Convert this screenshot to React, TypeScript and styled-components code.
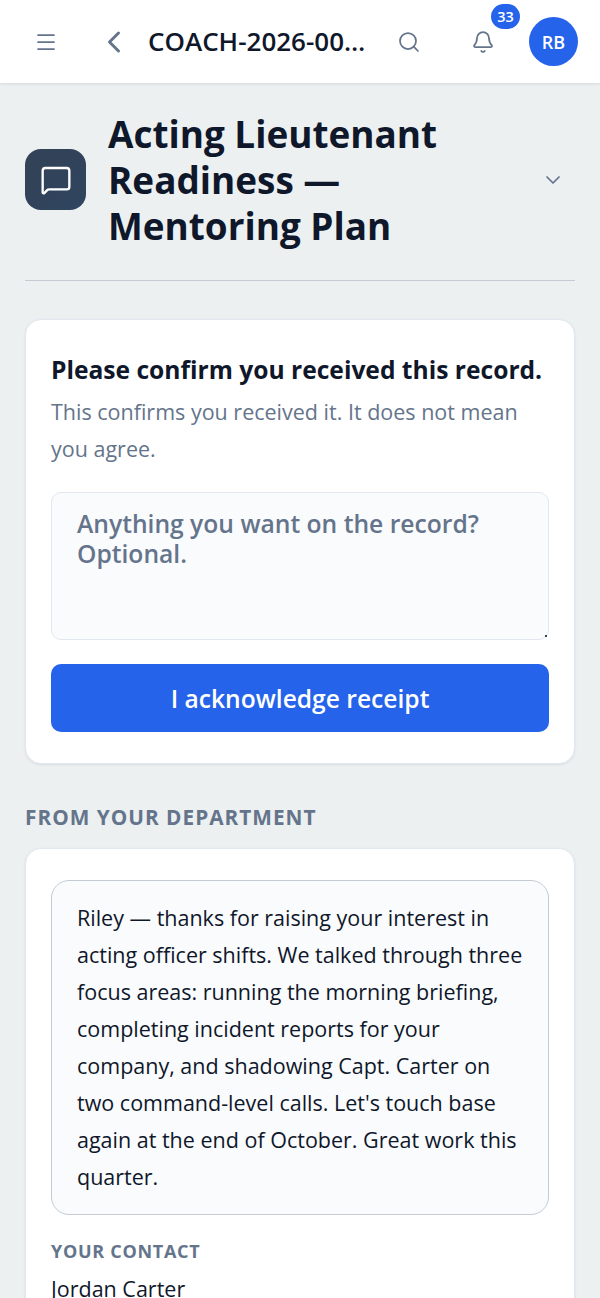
import styled, { createGlobalStyle } from 'styled-components'
import { Menu, ChevronLeft, ChevronDown, Search, Bell, MessageSquare } from 'lucide-react'

const GlobalStyle = createGlobalStyle`
  html, body {
    margin: 0;
    padding: 0;
    background: #ecf0f1;
  }
  body {
    font-family: 'Open Sans', 'Noto Sans', sans-serif;
    color: #0f172a;
    overflow: hidden;
    height: 1298px;
  }
  * {
    box-sizing: border-box;
  }
`

const TopBar = styled.header`
  height: 83px;
  background: #ffffff;
  box-shadow: 0 1px 3px rgba(15, 23, 42, 0.1);
  display: flex;
  align-items: center;
  padding: 0 22px 0 34px;
  position: relative;
`

const IconButton = styled.div<{ $width: number; $inset?: number }>`
  width: ${(p) => p.$width}px;
  padding-left: ${(p) => p.$inset || 0}px;
  flex: none;
  display: flex;
  align-items: center;
  color: #64748b;
`

const RecordId = styled.div`
  width: 221px;
  flex: none;
  margin-bottom: 2px;
  font-size: 26px;
  font-weight: 600;
  line-height: 36px;
  color: #0f172a;
  white-space: nowrap;
  overflow: hidden;
  text-overflow: ellipsis;
`

const BellWrap = styled.div`
  width: 59px;
  height: 40px;
  flex: none;
  display: flex;
  align-items: center;
  padding-left: 1px;
  color: #64748b;
  position: relative;
`

const Badge = styled.span`
  position: absolute;
  left: 21px;
  top: -18px;
  width: 29px;
  height: 25px;
  border-radius: 13px;
  background: #2563eb;
  color: #ffffff;
  font-size: 14.5px;
  font-weight: 600;
  line-height: 25px;
  text-align: center;
`

const Avatar = styled.div`
  width: 49px;
  height: 49px;
  flex: none;
  border-radius: 50%;
  background: #2563eb;
  color: #ffffff;
  font-size: 18px;
  font-weight: 600;
  display: flex;
  align-items: center;
  justify-content: center;
`

const Content = styled.main`
  padding: 28px 25px 0;
`

const TitleRow = styled.div`
  display: flex;
  align-items: center;
  padding-bottom: 31px;
  border-bottom: 1px solid #c4cbd2;
`

const TitleIcon = styled.div`
  width: 61px;
  height: 61px;
  flex: none;
  border-radius: 16px;
  background: linear-gradient(135deg, #334155, #2f4560);
  color: #ffffff;
  display: flex;
  align-items: center;
  justify-content: center;
  margin: 0 22px 1px 0;
`

const Title = styled.h1`
  flex: 1;
  margin: 0;
  font-size: 36.9px;
  font-weight: 700;
  line-height: 46px;
  color: #0f172a;
`

const Collapse = styled.div`
  width: 58px;
  flex: none;
  display: flex;
  justify-content: center;
  color: #64748b;
  padding-left: 14px;
`

const Card = styled.section`
  background: #ffffff;
  border-radius: 16px;
  border: 1px solid #e2e8f0;
  box-shadow: 0 1px 3px rgba(15, 23, 42, 0.08);
`

const AckCard = styled(Card)`
  margin-top: 38px;
  padding: 31px 25px 31px;
`

const AckTitle = styled.h2`
  margin: 0;
  font-size: 24.6px;
  font-weight: 700;
  line-height: 38px;
  color: #0f172a;
`

const AckHint = styled.p`
  margin: 4px 0 25px;
  font-size: 21.5px;
  line-height: 37px;
  color: #64748b;
`

const NoteInput = styled.textarea`
  display: block;
  width: 100%;
  height: 148px;
  padding: 16px 25px;
  border: 1px solid #e2e8f0;
  border-radius: 10px;
  background: #fafbfd;
  font-family: inherit;
  font-size: 24.65px;
  font-weight: 600;
  line-height: 30px;
  color: #0f172a;

  &::placeholder {
    color: #64748b;
    opacity: 1;
  }

  &::-webkit-resizer {
    background: radial-gradient(circle at 13px 12px, #334155 1px, transparent 1.5px);
  }
`

const AckButton = styled.button`
  display: block;
  width: 100%;
  height: 68px;
  margin-top: 24px;
  border: none;
  border-radius: 10px;
  background: #2563eb;
  color: #ffffff;
  font-family: inherit;
  font-size: 24.6px;
  font-weight: 600;
`

const SectionLabel = styled.h3`
  margin: 37px 0 15px;
  font-size: 20.8px;
  font-weight: 700;
  line-height: 32px;
  letter-spacing: 1px;
  text-transform: uppercase;
  color: #64748b;
`

const MessageCard = styled(Card)`
  padding: 31px 25px;
  height: 600px;
`

const MessageBox = styled.div`
  border: 1px solid #c4cbd2;
  border-radius: 18px;
  background: #fafbfd;
  padding: 18px 25px 19px;
  font-size: 21.5px;
  line-height: 37px;
  color: #0f172a;
`

const ContactLabel = styled.div`
  margin-top: 22px;
  font-size: 18px;
  font-weight: 700;
  line-height: 28px;
  letter-spacing: 0.7px;
  text-transform: uppercase;
  color: #64748b;
`

const ContactName = styled.div`
  margin-top: 7px;
  font-size: 21.5px;
  line-height: 34px;
  color: #0f172a;
`

export default function App() {
  return (
    <>
      <GlobalStyle />
      <TopBar>
        <IconButton $width={62}>
          <Menu size={24} strokeWidth={1.75} />
        </IconButton>
        <IconButton $width={52}>
          <ChevronLeft size={36} strokeWidth={2} />
        </IconButton>
        <RecordId>COACH-2026-0042</RecordId>
        <IconButton $width={101} $inset={28}>
          <Search size={24} strokeWidth={1.75} />
        </IconButton>
        <BellWrap>
          <Bell size={24} strokeWidth={1.75} />
          <Badge>33</Badge>
        </BellWrap>
        <Avatar>RB</Avatar>
      </TopBar>
      <Content>
        <TitleRow>
          <TitleIcon>
            <MessageSquare size={32} strokeWidth={1.75} />
          </TitleIcon>
          <Title>Acting Lieutenant Readiness — Mentoring Plan</Title>
          <Collapse>
            <ChevronDown size={24} strokeWidth={1.75} />
          </Collapse>
        </TitleRow>
        <AckCard>
          <AckTitle>Please confirm you received this record.</AckTitle>
          <AckHint>This confirms you received it. It does not mean you agree.</AckHint>
          <NoteInput placeholder="Anything you want on the record? Optional." />
          <AckButton>I acknowledge receipt</AckButton>
        </AckCard>
        <SectionLabel>From your department</SectionLabel>
        <MessageCard>
          <MessageBox>
            Riley — thanks for raising your interest in acting officer shifts. We talked through
            three focus areas: running the morning briefing, completing incident reports for your
            company, and shadowing Capt. Carter on two command-level calls. Let's touch base again
            at the end of October. Great work this quarter.
          </MessageBox>
          <ContactLabel>Your contact</ContactLabel>
          <ContactName>Jordan Carter</ContactName>
        </MessageCard>
      </Content>
    </>
  )
}
